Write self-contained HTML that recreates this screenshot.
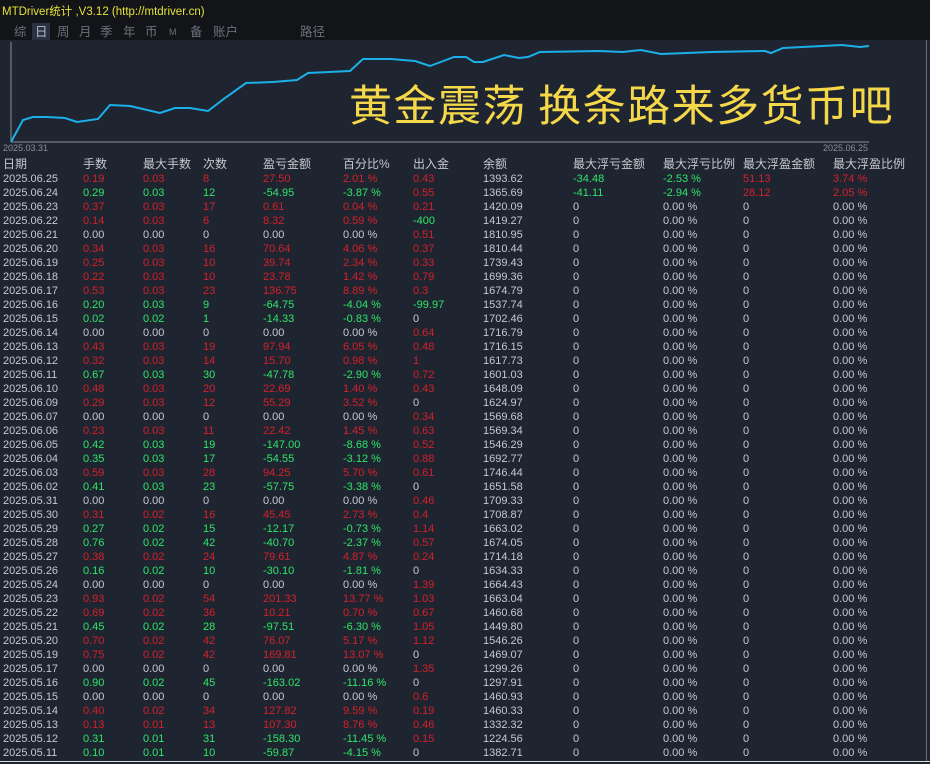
<!DOCTYPE html>
<html><head><meta charset="utf-8"><style>
*{margin:0;padding:0;box-sizing:border-box}
body{width:930px;height:764px;background:#1f2530;overflow:hidden;position:relative;font-family:"Liberation Sans","Noto Sans CJK SC",sans-serif;color:#c4c8d0}
#top{position:absolute;left:0;top:0;width:930px;height:40px;background:#121417}
#title{position:absolute;left:2px;top:3px;font-size:11.5px;color:#e6e23a;white-space:nowrap}
.tab{position:absolute;top:24px;font-size:12.5px;color:#6a717c;line-height:16px}
#tsel{position:absolute;left:32px;top:23px;width:18px;height:17px;background:#283240}
#chart{position:absolute;left:0;top:40px}
#big{position:absolute;left:349px;top:78px;font-size:43px;color:#f5d84a;letter-spacing:1.5px;white-space:nowrap;font-family:"Noto Sans CJK SC",sans-serif;line-height:50px}
.dl{position:absolute;top:143px;font-size:9px;color:#8a909a}
table{position:absolute;left:3px;top:157px;border-collapse:collapse;table-layout:fixed;font-size:11px}
td{height:14px;line-height:14px;padding:0;white-space:nowrap;overflow:hidden}
tr.h td{font-size:12px;height:15px;line-height:15px;color:#c4c8d0}
.r{color:#d4202a}.g{color:#2ee56a}
#rb{position:absolute;left:926px;top:40px;width:1px;height:722px;background:#6a7078}
#bl{position:absolute;left:0;top:761px;width:930px;height:1px;background:#ddd}
</style></head><body>
<div id="top"></div>
<div id="title">MTDriver统计 ,V3.12 (http://mtdriver.cn)</div>
<div id="tsel"></div>
<span class="tab" style="left:14px">综</span><span class="tab" style="left:35px;color:#b8bec8">日</span><span class="tab" style="left:57px">周</span><span class="tab" style="left:79px">月</span><span class="tab" style="left:100px">季</span><span class="tab" style="left:123px">年</span><span class="tab" style="left:145px">币</span><span class="tab" style="left:169px;font-size:9px">M</span><span class="tab" style="left:190px">备</span><span class="tab" style="left:213px">账户</span><span class="tab" style="left:300px">路径</span>
<svg id="chart" width="930" height="105">
<line x1="11" y1="2" x2="11" y2="102" stroke="#8a909a" stroke-width="1"/>
<line x1="11" y1="102" x2="869" y2="102" stroke="#8a909a" stroke-width="1"/>
<polyline fill="none" stroke="#1cb0e8" stroke-width="2" points="11,102 23,80 33,77 47,77 65,78 77,82 98,79 110,65 130,66 160,73 175,68 190,68 208,71 225,58 246,43 273,42 297,40 308,33 350,31 363,19 391,19 415,21 430,26 454,17 466,17 474,22 483,22 504,15 519,18 528,17 540,12 599,11 623,12 641,10 661,14 712,12 765,11 771,13 783,8 842,5 860,7 869,6"/>
</svg>
<div id="big">黄金震荡 换条路来多货币吧</div>
<div class="dl" style="left:3px">2025.03.31</div>
<div class="dl" style="left:823px">2025.06.25</div>
<div id="rb"></div>
<table>
<colgroup><col style="width:80px"><col style="width:60px"><col style="width:60px"><col style="width:60px"><col style="width:80px"><col style="width:70px"><col style="width:70px"><col style="width:90px"><col style="width:90px"><col style="width:80px"><col style="width:90px"><col style="width:90px"></colgroup>
<tr class="h"><td>日期</td><td>手数</td><td>最大手数</td><td>次数</td><td>盈亏金额</td><td>百分比%</td><td>出入金</td><td>余额</td><td>最大浮亏金额</td><td>最大浮亏比例</td><td>最大浮盈金额</td><td>最大浮盈比例</td></tr>
<tr><td>2025.06.25</td><td class="r">0.19</td><td class="r">0.03</td><td class="r">8</td><td class="r">27.50</td><td class="r">2.01 %</td><td class="r">0.43</td><td>1393.62</td><td class="g">-34.48</td><td class="g">-2.53 %</td><td class="r">51.13</td><td class="r">3.74 %</td></tr>
<tr><td>2025.06.24</td><td class="g">0.29</td><td class="g">0.03</td><td class="g">12</td><td class="g">-54.95</td><td class="g">-3.87 %</td><td class="r">0.55</td><td>1365.69</td><td class="g">-41.11</td><td class="g">-2.94 %</td><td class="r">28.12</td><td class="r">2.05 %</td></tr>
<tr><td>2025.06.23</td><td class="r">0.37</td><td class="r">0.03</td><td class="r">17</td><td class="r">0.61</td><td class="r">0.04 %</td><td class="r">0.21</td><td>1420.09</td><td>0</td><td>0.00 %</td><td>0</td><td>0.00 %</td></tr>
<tr><td>2025.06.22</td><td class="r">0.14</td><td class="r">0.03</td><td class="r">6</td><td class="r">8.32</td><td class="r">0.59 %</td><td class="g">-400</td><td>1419.27</td><td>0</td><td>0.00 %</td><td>0</td><td>0.00 %</td></tr>
<tr><td>2025.06.21</td><td>0.00</td><td>0.00</td><td>0</td><td>0.00</td><td>0.00 %</td><td class="r">0.51</td><td>1810.95</td><td>0</td><td>0.00 %</td><td>0</td><td>0.00 %</td></tr>
<tr><td>2025.06.20</td><td class="r">0.34</td><td class="r">0.03</td><td class="r">16</td><td class="r">70.64</td><td class="r">4.06 %</td><td class="r">0.37</td><td>1810.44</td><td>0</td><td>0.00 %</td><td>0</td><td>0.00 %</td></tr>
<tr><td>2025.06.19</td><td class="r">0.25</td><td class="r">0.03</td><td class="r">10</td><td class="r">39.74</td><td class="r">2.34 %</td><td class="r">0.33</td><td>1739.43</td><td>0</td><td>0.00 %</td><td>0</td><td>0.00 %</td></tr>
<tr><td>2025.06.18</td><td class="r">0.22</td><td class="r">0.03</td><td class="r">10</td><td class="r">23.78</td><td class="r">1.42 %</td><td class="r">0.79</td><td>1699.36</td><td>0</td><td>0.00 %</td><td>0</td><td>0.00 %</td></tr>
<tr><td>2025.06.17</td><td class="r">0.53</td><td class="r">0.03</td><td class="r">23</td><td class="r">136.75</td><td class="r">8.89 %</td><td class="r">0.3</td><td>1674.79</td><td>0</td><td>0.00 %</td><td>0</td><td>0.00 %</td></tr>
<tr><td>2025.06.16</td><td class="g">0.20</td><td class="g">0.03</td><td class="g">9</td><td class="g">-64.75</td><td class="g">-4.04 %</td><td class="g">-99.97</td><td>1537.74</td><td>0</td><td>0.00 %</td><td>0</td><td>0.00 %</td></tr>
<tr><td>2025.06.15</td><td class="g">0.02</td><td class="g">0.02</td><td class="g">1</td><td class="g">-14.33</td><td class="g">-0.83 %</td><td>0</td><td>1702.46</td><td>0</td><td>0.00 %</td><td>0</td><td>0.00 %</td></tr>
<tr><td>2025.06.14</td><td>0.00</td><td>0.00</td><td>0</td><td>0.00</td><td>0.00 %</td><td class="r">0.64</td><td>1716.79</td><td>0</td><td>0.00 %</td><td>0</td><td>0.00 %</td></tr>
<tr><td>2025.06.13</td><td class="r">0.43</td><td class="r">0.03</td><td class="r">19</td><td class="r">97.94</td><td class="r">6.05 %</td><td class="r">0.48</td><td>1716.15</td><td>0</td><td>0.00 %</td><td>0</td><td>0.00 %</td></tr>
<tr><td>2025.06.12</td><td class="r">0.32</td><td class="r">0.03</td><td class="r">14</td><td class="r">15.70</td><td class="r">0.98 %</td><td class="r">1</td><td>1617.73</td><td>0</td><td>0.00 %</td><td>0</td><td>0.00 %</td></tr>
<tr><td>2025.06.11</td><td class="g">0.67</td><td class="g">0.03</td><td class="g">30</td><td class="g">-47.78</td><td class="g">-2.90 %</td><td class="r">0.72</td><td>1601.03</td><td>0</td><td>0.00 %</td><td>0</td><td>0.00 %</td></tr>
<tr><td>2025.06.10</td><td class="r">0.48</td><td class="r">0.03</td><td class="r">20</td><td class="r">22.69</td><td class="r">1.40 %</td><td class="r">0.43</td><td>1648.09</td><td>0</td><td>0.00 %</td><td>0</td><td>0.00 %</td></tr>
<tr><td>2025.06.09</td><td class="r">0.29</td><td class="r">0.03</td><td class="r">12</td><td class="r">55.29</td><td class="r">3.52 %</td><td>0</td><td>1624.97</td><td>0</td><td>0.00 %</td><td>0</td><td>0.00 %</td></tr>
<tr><td>2025.06.07</td><td>0.00</td><td>0.00</td><td>0</td><td>0.00</td><td>0.00 %</td><td class="r">0.34</td><td>1569.68</td><td>0</td><td>0.00 %</td><td>0</td><td>0.00 %</td></tr>
<tr><td>2025.06.06</td><td class="r">0.23</td><td class="r">0.03</td><td class="r">11</td><td class="r">22.42</td><td class="r">1.45 %</td><td class="r">0.63</td><td>1569.34</td><td>0</td><td>0.00 %</td><td>0</td><td>0.00 %</td></tr>
<tr><td>2025.06.05</td><td class="g">0.42</td><td class="g">0.03</td><td class="g">19</td><td class="g">-147.00</td><td class="g">-8.68 %</td><td class="r">0.52</td><td>1546.29</td><td>0</td><td>0.00 %</td><td>0</td><td>0.00 %</td></tr>
<tr><td>2025.06.04</td><td class="g">0.35</td><td class="g">0.03</td><td class="g">17</td><td class="g">-54.55</td><td class="g">-3.12 %</td><td class="r">0.88</td><td>1692.77</td><td>0</td><td>0.00 %</td><td>0</td><td>0.00 %</td></tr>
<tr><td>2025.06.03</td><td class="r">0.59</td><td class="r">0.03</td><td class="r">28</td><td class="r">94.25</td><td class="r">5.70 %</td><td class="r">0.61</td><td>1746.44</td><td>0</td><td>0.00 %</td><td>0</td><td>0.00 %</td></tr>
<tr><td>2025.06.02</td><td class="g">0.41</td><td class="g">0.03</td><td class="g">23</td><td class="g">-57.75</td><td class="g">-3.38 %</td><td>0</td><td>1651.58</td><td>0</td><td>0.00 %</td><td>0</td><td>0.00 %</td></tr>
<tr><td>2025.05.31</td><td>0.00</td><td>0.00</td><td>0</td><td>0.00</td><td>0.00 %</td><td class="r">0.46</td><td>1709.33</td><td>0</td><td>0.00 %</td><td>0</td><td>0.00 %</td></tr>
<tr><td>2025.05.30</td><td class="r">0.31</td><td class="r">0.02</td><td class="r">16</td><td class="r">45.45</td><td class="r">2.73 %</td><td class="r">0.4</td><td>1708.87</td><td>0</td><td>0.00 %</td><td>0</td><td>0.00 %</td></tr>
<tr><td>2025.05.29</td><td class="g">0.27</td><td class="g">0.02</td><td class="g">15</td><td class="g">-12.17</td><td class="g">-0.73 %</td><td class="r">1.14</td><td>1663.02</td><td>0</td><td>0.00 %</td><td>0</td><td>0.00 %</td></tr>
<tr><td>2025.05.28</td><td class="g">0.76</td><td class="g">0.02</td><td class="g">42</td><td class="g">-40.70</td><td class="g">-2.37 %</td><td class="r">0.57</td><td>1674.05</td><td>0</td><td>0.00 %</td><td>0</td><td>0.00 %</td></tr>
<tr><td>2025.05.27</td><td class="r">0.38</td><td class="r">0.02</td><td class="r">24</td><td class="r">79.61</td><td class="r">4.87 %</td><td class="r">0.24</td><td>1714.18</td><td>0</td><td>0.00 %</td><td>0</td><td>0.00 %</td></tr>
<tr><td>2025.05.26</td><td class="g">0.16</td><td class="g">0.02</td><td class="g">10</td><td class="g">-30.10</td><td class="g">-1.81 %</td><td>0</td><td>1634.33</td><td>0</td><td>0.00 %</td><td>0</td><td>0.00 %</td></tr>
<tr><td>2025.05.24</td><td>0.00</td><td>0.00</td><td>0</td><td>0.00</td><td>0.00 %</td><td class="r">1.39</td><td>1664.43</td><td>0</td><td>0.00 %</td><td>0</td><td>0.00 %</td></tr>
<tr><td>2025.05.23</td><td class="r">0.93</td><td class="r">0.02</td><td class="r">54</td><td class="r">201.33</td><td class="r">13.77 %</td><td class="r">1.03</td><td>1663.04</td><td>0</td><td>0.00 %</td><td>0</td><td>0.00 %</td></tr>
<tr><td>2025.05.22</td><td class="r">0.69</td><td class="r">0.02</td><td class="r">36</td><td class="r">10.21</td><td class="r">0.70 %</td><td class="r">0.67</td><td>1460.68</td><td>0</td><td>0.00 %</td><td>0</td><td>0.00 %</td></tr>
<tr><td>2025.05.21</td><td class="g">0.45</td><td class="g">0.02</td><td class="g">28</td><td class="g">-97.51</td><td class="g">-6.30 %</td><td class="r">1.05</td><td>1449.80</td><td>0</td><td>0.00 %</td><td>0</td><td>0.00 %</td></tr>
<tr><td>2025.05.20</td><td class="r">0.70</td><td class="r">0.02</td><td class="r">42</td><td class="r">76.07</td><td class="r">5.17 %</td><td class="r">1.12</td><td>1546.26</td><td>0</td><td>0.00 %</td><td>0</td><td>0.00 %</td></tr>
<tr><td>2025.05.19</td><td class="r">0.75</td><td class="r">0.02</td><td class="r">42</td><td class="r">169.81</td><td class="r">13.07 %</td><td>0</td><td>1469.07</td><td>0</td><td>0.00 %</td><td>0</td><td>0.00 %</td></tr>
<tr><td>2025.05.17</td><td>0.00</td><td>0.00</td><td>0</td><td>0.00</td><td>0.00 %</td><td class="r">1.35</td><td>1299.26</td><td>0</td><td>0.00 %</td><td>0</td><td>0.00 %</td></tr>
<tr><td>2025.05.16</td><td class="g">0.90</td><td class="g">0.02</td><td class="g">45</td><td class="g">-163.02</td><td class="g">-11.16 %</td><td>0</td><td>1297.91</td><td>0</td><td>0.00 %</td><td>0</td><td>0.00 %</td></tr>
<tr><td>2025.05.15</td><td>0.00</td><td>0.00</td><td>0</td><td>0.00</td><td>0.00 %</td><td class="r">0.6</td><td>1460.93</td><td>0</td><td>0.00 %</td><td>0</td><td>0.00 %</td></tr>
<tr><td>2025.05.14</td><td class="r">0.40</td><td class="r">0.02</td><td class="r">34</td><td class="r">127.82</td><td class="r">9.59 %</td><td class="r">0.19</td><td>1460.33</td><td>0</td><td>0.00 %</td><td>0</td><td>0.00 %</td></tr>
<tr><td>2025.05.13</td><td class="r">0.13</td><td class="r">0.01</td><td class="r">13</td><td class="r">107.30</td><td class="r">8.76 %</td><td class="r">0.46</td><td>1332.32</td><td>0</td><td>0.00 %</td><td>0</td><td>0.00 %</td></tr>
<tr><td>2025.05.12</td><td class="g">0.31</td><td class="g">0.01</td><td class="g">31</td><td class="g">-158.30</td><td class="g">-11.45 %</td><td class="r">0.15</td><td>1224.56</td><td>0</td><td>0.00 %</td><td>0</td><td>0.00 %</td></tr>
<tr><td>2025.05.11</td><td class="g">0.10</td><td class="g">0.01</td><td class="g">10</td><td class="g">-59.87</td><td class="g">-4.15 %</td><td>0</td><td>1382.71</td><td>0</td><td>0.00 %</td><td>0</td><td>0.00 %</td></tr>
</table>
<div id="bl"></div>
</body></html>
